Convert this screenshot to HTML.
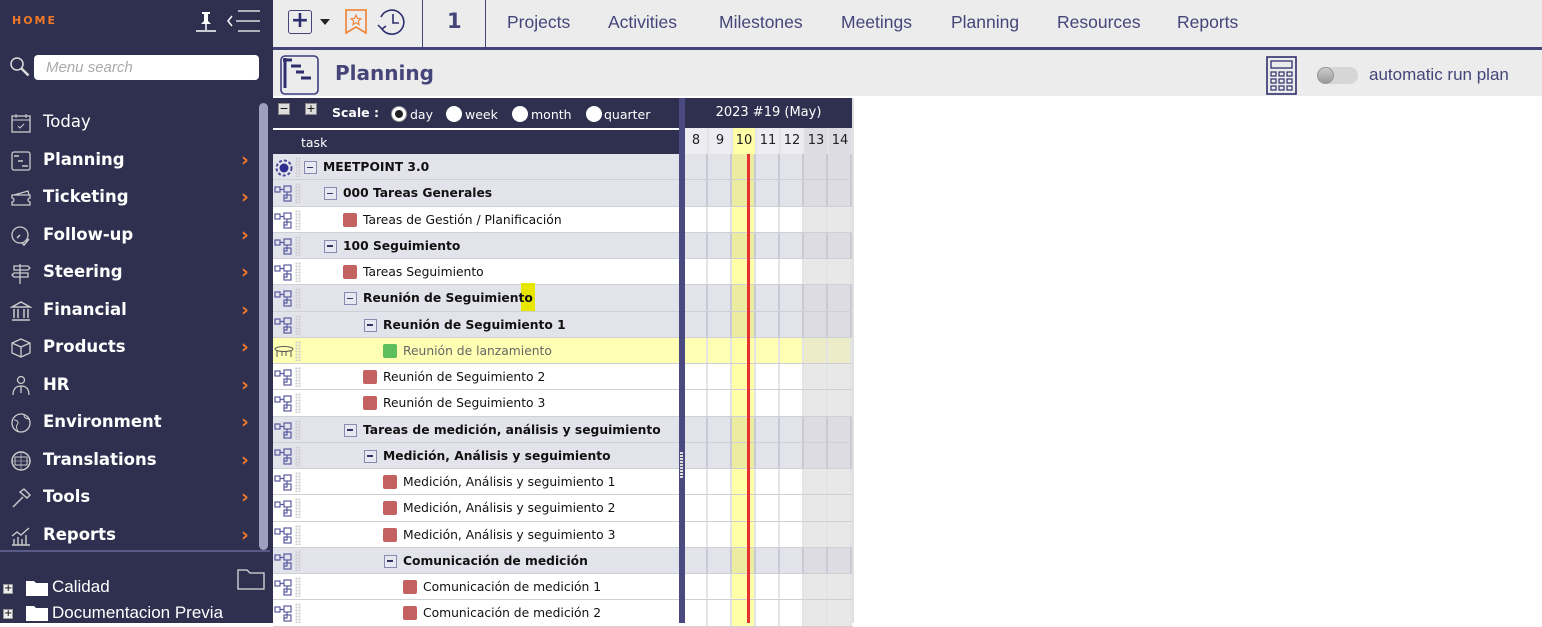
<!DOCTYPE html>
<html><head><meta charset="utf-8"><style>
*{box-sizing:border-box;margin:0;padding:0}
body{width:1542px;height:623px;overflow:hidden;background:#fff;font-family:"DejaVu Sans","Liberation Sans",sans-serif;position:relative}
.sb{position:absolute;left:0;top:0;width:272px;height:623px;background:#2f2f4f;color:#fff}
.mi{position:absolute;left:0;width:260px;height:36px;font-weight:bold;font-size:16.5px;line-height:36px}
.mi span{position:absolute;left:43px}
.mi svg{position:absolute;left:10px;top:8px}
.mi .ar{position:absolute;left:241px;color:#f07a28;font-size:19px;font-weight:bold}
.top{position:absolute;left:272px;top:0;width:1270px;height:47px;background:#ececec}
.nav{position:absolute;top:12px;font-family:"Liberation Sans",sans-serif;font-size:17.5px;color:#45457a}
.r{position:absolute;left:273px;width:580px;height:26.3px;border-bottom:1px solid #cfcfd6;font-size:12.3px;line-height:26px;color:#111}
.g{background:#e3e3ec;font-weight:bold}
.l{background:#fff}
.y{background:#ffffb4;color:#666}
.t{position:absolute;white-space:nowrap}
.bx{position:absolute;top:7px;width:13px;height:13px;border:1.5px solid #8a8ab0;background:#e8e8f2}
.bx:after{content:"";position:absolute;left:2px;top:4.5px;width:6px;height:1.5px;background:#333366}
.sq{position:absolute;top:6px;width:14px;height:14px;border-radius:2px;background:#c46262}
.ic{position:absolute;left:1px;top:5px}
.dt{position:absolute;left:22px;top:3px;width:6px;height:20px;background-image:radial-gradient(#ccc 1px,transparent 1.2px);background-size:3px 3px}
.c{position:absolute;top:0;width:24px;height:100%;border-right:2px solid #e4e4e4}
.g .c{border-right-color:#c9c9d3}
</style></head><body>
<div class="sb">
 <div style="position:absolute;left:12px;top:14px;color:#f07a28;font-weight:bold;font-size:11px;letter-spacing:2px">HOME</div>
 <svg style="position:absolute;left:194px;top:10px" width="24" height="24" viewBox="0 0 24 24"><path d="M8 2h8v2h-2v7l3 3H7l3-3V4H8z" fill="#fff"/><path d="M12 14v6M2 21h20" stroke="#fff" stroke-width="1.5"/></svg>
 <svg style="position:absolute;left:226px;top:10px" width="38" height="22" viewBox="0 0 38 22"><path d="M6 6l-4 5 4 5" stroke="#fff" fill="none" stroke-width="1.5"/><path d="M12 1h22M10 11h24M12 21h22" stroke="#fff" stroke-width="1.3"/></svg>
 <svg style="position:absolute;left:9px;top:56px" width="22" height="22" viewBox="0 0 22 22"><circle cx="8" cy="8" r="6" stroke="#ddd" stroke-width="1.5" fill="none"/><path d="M12.5 12.5l7 7" stroke="#ddd" stroke-width="2.5"/></svg>
 <div style="position:absolute;left:34px;top:55px;width:225px;height:25px;background:#fff;border-radius:4px;color:#aaa;font-style:italic;font-size:15px;line-height:25px;padding-left:12px;font-family:'Liberation Sans',sans-serif">Menu search</div>
 <div class="mi" style="top:104px;font-weight:normal"><svg width="22" height="22"><rect x="2" y="4" width="18" height="16" fill="none" stroke="#ccc" stroke-width="1.3"/><path d="M2 8h18M6 2v4M16 2v4M8 14l2 2 4-4" stroke="#ccc" fill="none"/></svg><span>Today</span></div>
 <div class="mi" style="top:142px"><svg width="22" height="22"><rect x="2" y="2" width="18" height="18" rx="2" fill="none" stroke="#ccc" stroke-width="1.3"/><path d="M4 6h5M8 11h5M12 16h6" stroke="#ccc" stroke-width="1.5"/></svg><span>Planning</span><b class="ar">›</b></div>
 <div class="mi" style="top:179px"><svg width="22" height="22"><path d="M2 8h18v3a2 2 0 0 0 0 4v3H2v-3a2 2 0 0 0 0-4z M4 8l14-4 1 4" fill="none" stroke="#ccc" stroke-width="1.3"/></svg><span>Ticketing</span><b class="ar">›</b></div>
 <div class="mi" style="top:217px"><svg width="22" height="22"><circle cx="10" cy="10" r="8" fill="none" stroke="#ccc" stroke-width="1.3"/><path d="M10 10l-3 3M12 18l2 2 5-6" stroke="#ccc" fill="none" stroke-width="1.5"/></svg><span>Follow-up</span><b class="ar">›</b></div>
 <div class="mi" style="top:254px"><svg width="22" height="22"><path d="M10 2v20M4 4h14l2 2-2 2H4zM18 11H4l-2 2 2 2h14z" fill="none" stroke="#ccc" stroke-width="1.3"/></svg><span>Steering</span><b class="ar">›</b></div>
 <div class="mi" style="top:292px"><svg width="22" height="22"><path d="M2 7l9-5 9 5zM4 9v9M8 9v9M14 9v9M18 9v9M2 20h18" fill="none" stroke="#ccc" stroke-width="1.5"/></svg><span>Financial</span><b class="ar">›</b></div>
 <div class="mi" style="top:329px"><svg width="22" height="22"><path d="M11 2l9 4v10l-9 4-9-4V6zM2 6l9 4 9-4M11 10v10" fill="none" stroke="#ccc" stroke-width="1.3"/></svg><span>Products</span><b class="ar">›</b></div>
 <div class="mi" style="top:367px"><svg width="22" height="22"><circle cx="11" cy="5" r="3.5" fill="none" stroke="#ccc" stroke-width="1.3"/><path d="M3 20c0-6 3-9 8-9s8 3 8 9M11 11v7" fill="none" stroke="#ccc" stroke-width="1.3"/></svg><span>HR</span><b class="ar">›</b></div>
 <div class="mi" style="top:404px"><svg width="22" height="22"><circle cx="11" cy="11" r="9" fill="none" stroke="#ccc" stroke-width="1.3"/><path d="M4 8c4 0 5 3 3 5s1 5 1 7M14 3c0 3 3 4 6 4" fill="none" stroke="#ccc"/></svg><span>Environment</span><b class="ar">›</b></div>
 <div class="mi" style="top:442px"><svg width="22" height="22"><circle cx="11" cy="11" r="9" fill="none" stroke="#ccc" stroke-width="1.5"/><rect x="5" y="7" width="12" height="8" fill="none" stroke="#ccc"/><path d="M2 11h18M11 2v18" stroke="#ccc" stroke-width=".6"/></svg><span>Translations</span><b class="ar">›</b></div>
 <div class="mi" style="top:479px"><svg width="22" height="22"><path d="M3 20l10-10M10 5l4-3 6 6-3 3z" fill="none" stroke="#ccc" stroke-width="1.4"/></svg><span>Tools</span><b class="ar">›</b></div>
 <div class="mi" style="top:517px"><svg width="22" height="22"><path d="M2 20h18M4 20v-6M8 20v-8M12 20v-6M16 20v-10M2 11l5-4 4 3 8-7" fill="none" stroke="#ccc" stroke-width="1.4"/></svg><span>Reports</span><b class="ar">›</b></div>
 <div style="position:absolute;left:259px;top:103px;width:9px;height:447px;border-radius:5px;background:#9e9ec0"></div>
 <div style="position:absolute;left:0;top:550px;width:272px;height:2px;background:#5a5a88"></div>
 <svg style="position:absolute;left:237px;top:568px" width="28" height="22"><path d="M1 2h9l3 3h14v16H1z" fill="none" stroke="#ddd" stroke-width="1.3"/></svg>
 <div style="position:absolute;left:3px;top:584px;width:10px;height:10px;background:#eee;border:1px solid #999;font-size:10px;line-height:8px;color:#000;text-align:center">+</div>
 <svg style="position:absolute;left:26px;top:579px" width="22" height="17"><path d="M0 2h8l2 2h12v13H0z" fill="#fff"/></svg>
 <div style="position:absolute;left:52px;top:577px;font-size:17px;font-family:'Liberation Sans',sans-serif">Calidad</div>
 <div style="position:absolute;left:3px;top:609px;width:10px;height:10px;background:#eee;border:1px solid #999;font-size:10px;line-height:8px;color:#000;text-align:center">+</div>
 <svg style="position:absolute;left:26px;top:604px" width="22" height="17"><path d="M0 2h8l2 2h12v13H0z" fill="#fff"/></svg>
 <div style="position:absolute;left:52px;top:603px;font-size:17px;font-family:'Liberation Sans',sans-serif">Documentacion Previa</div>
</div>

<div class="top">
 <div style="position:absolute;left:16px;top:10px;width:24px;height:24px;border:1.5px solid #45457a;border-radius:3px;color:#2e2e6e;font-size:22px;line-height:20px;text-align:center;font-weight:bold">+</div>
 <div style="position:absolute;left:48px;top:19px;border:5px solid transparent;border-top:6px solid #222"></div>
 <svg style="position:absolute;left:72px;top:9px" width="24" height="26"><path d="M2 1h20v23l-10-6-10 6z" fill="none" stroke="#f07a28" stroke-width="1.5"/><path d="M12 6l1.5 3.5 3.5.3-2.7 2.3.9 3.6-3.2-2-3.2 2 .9-3.6-2.7-2.3 3.5-.3z" fill="none" stroke="#f07a28"/></svg>
 <svg style="position:absolute;left:104px;top:8px" width="30" height="28"><path d="M6 21A12 12 0 1 0 5 9" fill="none" stroke="#2e2e6e" stroke-width="1.6"/><path d="M2 17l4 4 4-3" fill="none" stroke="#2e2e6e" stroke-width="1.5"/><path d="M17 6v9h6" fill="none" stroke="#2e2e6e" stroke-width="1.6"/></svg>
 <div style="position:absolute;left:150px;top:0;width:1px;height:47px;background:#45457a"></div>
 <div style="position:absolute;left:175px;top:9px;font-size:21px;font-weight:bold;color:#45457a">1</div>
 <div style="position:absolute;left:213px;top:0;width:1px;height:47px;background:#45457a"></div>
 <div class="nav" style="left:235px">Projects</div>
 <div class="nav" style="left:336px">Activities</div>
 <div class="nav" style="left:447px">Milestones</div>
 <div class="nav" style="left:569px">Meetings</div>
 <div class="nav" style="left:679px">Planning</div>
 <div class="nav" style="left:785px">Resources</div>
 <div class="nav" style="left:905px">Reports</div>
</div>
<div style="position:absolute;left:272px;top:47px;width:1270px;height:3px;background:#45457a"></div>
<div style="position:absolute;left:272px;top:50px;width:1270px;height:47px;background:#ececec;border-bottom:1px solid #fff"></div>
<div style="position:absolute;left:270px;top:0;width:3px;height:623px;background:#2f2f4f"></div>
<svg style="position:absolute;left:280px;top:55px" width="39" height="40"><rect x="1" y="1" width="37" height="38" rx="4" fill="none" stroke="#3c3c80" stroke-width="1.6"/><path d="M3 5h9M11 11h10M16 17h8M21 23h10M5 3v30" stroke="#2e2e6e" stroke-width="3"/></svg>
<div style="position:absolute;left:335px;top:61px;font-size:20px;font-weight:bold;color:#45457a">Planning</div>
<svg style="position:absolute;left:1266px;top:56px" width="31" height="39"><rect x="1" y="1" width="29" height="37" fill="none" stroke="#2e2e6e" stroke-width="1.6"/><rect x="5" y="5" width="21" height="7" fill="none" stroke="#2e2e6e" stroke-width="1.3"/><g fill="none" stroke="#2e2e6e" stroke-width="1.2"><rect x="5" y="16" width="5" height="4"/><rect x="13" y="16" width="5" height="4"/><rect x="21" y="16" width="5" height="4"/><rect x="5" y="23" width="5" height="4"/><rect x="13" y="23" width="5" height="4"/><rect x="21" y="23" width="5" height="4"/><rect x="5" y="30" width="5" height="4"/><rect x="13" y="30" width="5" height="4"/><rect x="21" y="30" width="5" height="4"/></g></svg>
<div style="position:absolute;left:1317px;top:67px;width:41px;height:17px;border-radius:9px;background:#d6d6d6"></div>
<div style="position:absolute;left:1317px;top:67px;width:17px;height:17px;border-radius:50%;background:linear-gradient(#ccc,#999);border:1px solid #999"></div>
<div style="position:absolute;left:1369px;top:65px;font-size:17px;font-family:'Liberation Sans',sans-serif;color:#45457a">automatic run plan</div>

<div style="position:absolute;left:273px;top:98px;width:406px;height:56px;background:#2f2f4f;color:#fff;font-size:12.5px">
 <div style="position:absolute;left:5px;top:5px;width:12px;height:12px;background:#ddd;border:1px solid #888;font-size:11px;line-height:9px;text-align:center;color:#000">−</div>
 <div style="position:absolute;left:32px;top:5px;width:12px;height:12px;background:#ddd;border:1px solid #888;font-size:11px;line-height:10px;text-align:center;color:#000">+</div>
 <div style="position:absolute;left:59px;top:7px;font-weight:bold">Scale :</div>
 <div style="position:absolute;left:118px;top:8px;width:16px;height:16px;border-radius:50%;background:#fff;border:1px solid #999"><div style="margin:3px;width:8px;height:8px;border-radius:50%;background:#222"></div></div>
 <div style="position:absolute;left:137px;top:9px">day</div>
 <div style="position:absolute;left:173px;top:8px;width:16px;height:16px;border-radius:50%;background:#fff"></div>
 <div style="position:absolute;left:192px;top:9px">week</div>
 <div style="position:absolute;left:239px;top:8px;width:16px;height:16px;border-radius:50%;background:#fff"></div>
 <div style="position:absolute;left:258px;top:9px">month</div>
 <div style="position:absolute;left:313px;top:8px;width:16px;height:16px;border-radius:50%;background:#fff"></div>
 <div style="position:absolute;left:331px;top:9px">quarter</div>
 <div style="position:absolute;left:0;top:30px;width:406px;height:2px;background:#fff"></div>
 <div style="position:absolute;left:28px;top:37px">task</div>
</div>
<div style="position:absolute;left:685px;top:98px;width:167px;height:30px;background:#2f2f4f;color:#fff;font-size:13px;text-align:center;line-height:30px">2023 #19 (May)</div>
<div style="position:absolute;left:685px;top:128px;width:167px;height:26px;font-size:13px;line-height:26px;text-align:center;color:#222">
 <div class="c" style="left:0;background:#ececf2">8</div><div class="c" style="left:24px;background:#ececf2">9</div><div class="c" style="left:48px;background:#ffffa8">10</div><div class="c" style="left:72px;background:#ececf2">11</div><div class="c" style="left:96px;background:#ececf2">12</div><div class="c" style="left:120px;background:#dcdce2">13</div><div class="c" style="left:144px;background:#dcdce2">14</div>
</div>

<div id="rows"></div>
<script>
var tree='<svg class="ic" width="20" height="17"><g fill="none" stroke="#5a5aa0" stroke-width="1.2"><rect x="1" y="2" width="5" height="5"/><rect x="10" y="1" width="7" height="6"/><rect x="10" y="10" width="7" height="6"/><path d="M6 4.5h4M13 7v6h-3"/></g></svg>';
var gear='<svg class="ic" style="top:4px" width="20" height="20"><circle cx="10" cy="10" r="4.5" fill="#2e2e8e"/><circle cx="10" cy="10" r="7.5" fill="none" stroke="#4a4a9a" stroke-width="2" stroke-dasharray="3 2"/></svg>';
var table='<svg class="ic" style="top:8px" width="22" height="12"><ellipse cx="10" cy="3" rx="9" ry="2.5" fill="none" stroke="#555"/><path d="M3 5v6M17 5v6M8 5v5M12 5v5" stroke="#555"/></svg>';
var R=[
['g',0,'MEETPOINT 3.0',gear],['g',1,'000 Tareas Generales'],['l',2,'Tareas de Gestión / Planificación'],['g',1,'100 Seguimiento'],['l',2,'Tareas Seguimiento'],
['g',2,'Reunión de Seguimiento'],['g',3,'Reunión de Seguimiento 1'],['y',4,'Reunión de lanzamiento',table],['l',3,'Reunión de Seguimiento 2'],['l',3,'Reunión de Seguimiento 3'],
['g',2,'Tareas de medición, análisis y seguimiento'],['g',3,'Medición, Análisis y seguimiento'],['l',4,'Medición, Análisis y seguimiento 1'],['l',4,'Medición, Análisis y seguimiento 2'],['l',4,'Medición, Análisis y seguimiento 3'],
['g',4,'Comunicación de medición'],['l',5,'Comunicación de medición 1'],['l',5,'Comunicación de medición 2']];
var h='';
R.forEach(function(r,i){
 var top=154+i*26.25, tx=50+20*r[1], tp=r[0];
 h+='<div class="r '+tp+'" style="top:'+top+'px">'+(r[3]||tree)+'<div class="dt"></div>';
 if(i==5) h+='<div style="position:absolute;left:248px;top:-2px;width:14px;height:28px;background:#e6e600"></div>';
 if(tp=='g') h+='<div class="bx" style="left:'+(tx-19)+'px"></div>';
 else h+='<div class="sq" style="left:'+(tx-20)+'px;'+(tp=='y'?'background:#5cbf5c':'')+'"></div>';
 h+='<div class="t" style="left:'+tx+'px">'+r[2]+'</div>';
 var g=tp=='g';
 for(var k=0;k<7;k++){var bg=k==2?(g?'#ececa0':'#ffffa8'):(k>=5?(g?'#dcdce2':'#e8e8e8'):(g?'#e3e3ec':(tp=='y'?'#ffffb4':'#fff')));
  if(tp=='y'&&k>=5)bg='#ececc8';
  h+='<div class="c" style="left:'+(411+24*k)+'px;background:'+bg+'"></div>';}
 h+='</div>';
});
document.getElementById('rows').innerHTML=h;
</script>
<div style="position:absolute;left:679px;top:98px;width:6px;height:525px;background:#4a4a80"></div>
<div style="position:absolute;left:680px;top:452px;width:3px;height:26px;background:repeating-linear-gradient(#ddd 0 2px,#4a4a80 2px 3px)"></div>
<div style="position:absolute;left:747px;top:154px;width:3px;height:469px;background:#e83030"></div>
<div style="position:absolute;left:852px;top:98px;width:2px;height:525px;background:#e0e0e0"></div>
</body></html>
